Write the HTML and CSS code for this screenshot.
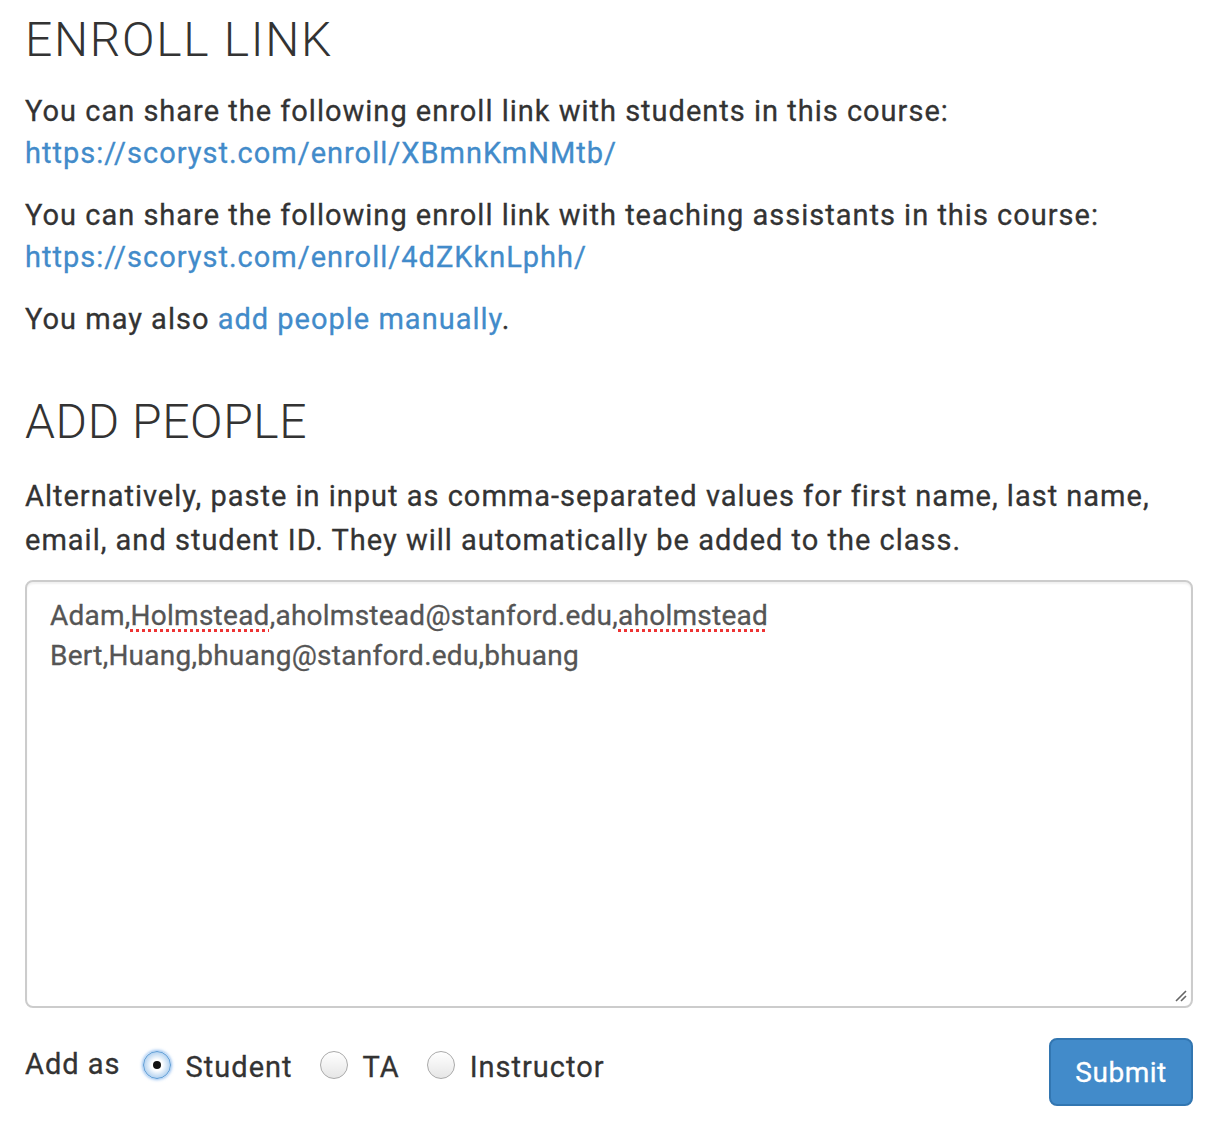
FILE: index.html
```html
<!DOCTYPE html>
<html>
<head>
<meta charset="utf-8">
<link rel="stylesheet" href="styles.css">
</head>
<body>
<div class="page">
  <h2 class="heading">Enroll Link</h2>
  <p class="text">You can share the following enroll link with students in this course:<br><a class="link" href="#">https://scoryst.com/enroll/XBmnKmNMtb/</a></p>
  <p class="text">You can share the following enroll link with teaching assistants in this course:<br><a class="link" href="#">https://scoryst.com/enroll/4dZKknLphh/</a></p>
  <p class="text">You may also <a class="link" href="#">add people manually</a>.</p>

  <h2 class="heading heading-second">Add People</h2>
  <p class="text text-loose">Alternatively, paste in input as comma-separated values for first name, last name, email, and student ID. They will automatically be added to the class.</p>
  <div class="textarea">
    <div class="ta-line">Adam,<span class="misspelled">Holmstead</span>,aholmstead@stanford.edu,<span class="misspelled">aholmstead</span></div>
    <div class="ta-line">Bert,Huang,bhuang@stanford.edu,bhuang</div>
    <svg class="grip" width="14" height="14" viewBox="0 0 14 14"><path d="M13 3 L3 13 M13 8 L8 13" stroke="#666" stroke-width="1.6" fill="none"/></svg>
  </div>
  <div class="form-row">
    <div class="radios">
      <span class="label">Add as</span>
      <span class="radio radio-checked"><span class="dot"></span></span>
      <span class="option">Student</span>
      <span class="radio"></span>
      <span class="option">TA</span>
      <span class="radio"></span>
      <span class="option">Instructor</span>
    </div>
    <button class="submit">Submit</button>
  </div>
</div>
</body>
</html>
```
FILE: styles.css
```css
html, body {
  margin: 0;
  padding: 0;
  background: #fff;
}
.page {
  padding: 0 19px 0 25px;
  font-family: Roboto, "Liberation Sans", sans-serif;
  color: #333;
}
.heading {
  font-family: Roboto, sans-serif;
  font-weight: 300;
  font-size: 48px;
  line-height: 56px;
  text-transform: uppercase;
  letter-spacing: 1.7px;
  margin: 12px 0 22px;
  color: #333;
}
.heading-second {
  margin-top: 54px;
  margin-bottom: 24px;
  letter-spacing: 0.6px;
}
.text {
  font-size: 29px;
  line-height: 42px;
  letter-spacing: 1px;
  margin: 0 0 20px;
  -webkit-text-stroke: 0.3px currentColor;
}
.text-loose {
  line-height: 44px;
  margin-bottom: 18px;
}
.link {
  color: #428bca;
  text-decoration: none;
}
.textarea {
  position: relative;
  box-sizing: border-box;
  height: 428px;
  border: 2px solid #ccc;
  border-radius: 8px;
  padding: 14px 23px;
  font-size: 28px;
  line-height: 40px;
  letter-spacing: 0.25px;
  color: #555;
  -webkit-text-stroke: 0.3px currentColor;
  box-shadow: inset 0 2px 2px rgba(0,0,0,0.06);
}
.misspelled {
  text-decoration: underline dotted #e33;
  text-decoration-thickness: 3px;
  text-underline-offset: 4px;
}
.grip {
  position: absolute;
  right: 4px;
  bottom: 4px;
}
.form-row {
  display: flex;
  justify-content: space-between;
  align-items: center;
  margin-top: 30px;
}
.radios {
  display: flex;
  align-items: center;
  font-size: 29px;
  letter-spacing: 1px;
  margin-bottom: 12px;
  -webkit-text-stroke: 0.3px currentColor;
}
.label {
  margin-right: 22px;
  position: relative;
  top: -3px;
}
.radio {
  box-sizing: border-box;
  width: 28px;
  height: 28px;
  border-radius: 50%;
  border: 1px solid #aaa;
  background: linear-gradient(#fff, #e6e6e6);
  margin-right: 15px;
  display: flex;
  align-items: center;
  justify-content: center;
  position: relative;
  top: -2px;
}
.radio-checked {
  border: 1px solid #5b9bd5;
  background: radial-gradient(circle, #fff 30%, #b5d3f0 70%, #7fb2e5 100%);
  box-shadow: 0 0 3px 1px rgba(80,150,230,0.6);
}
.dot {
  width: 8px;
  height: 8px;
  border-radius: 50%;
  background: #111;
}
.option {
  margin-right: 27px;
}
.submit {
  font-family: Roboto, sans-serif;
  font-size: 28px;
  letter-spacing: 0.5px;
  color: #fff;
  background: #428bca;
  border: 2px solid #3276b1;
  border-radius: 8px;
  width: 144px;
  height: 68px;
  padding: 0;
  margin-bottom: 1px;
  -webkit-text-stroke: 0.3px currentColor;
}
```
